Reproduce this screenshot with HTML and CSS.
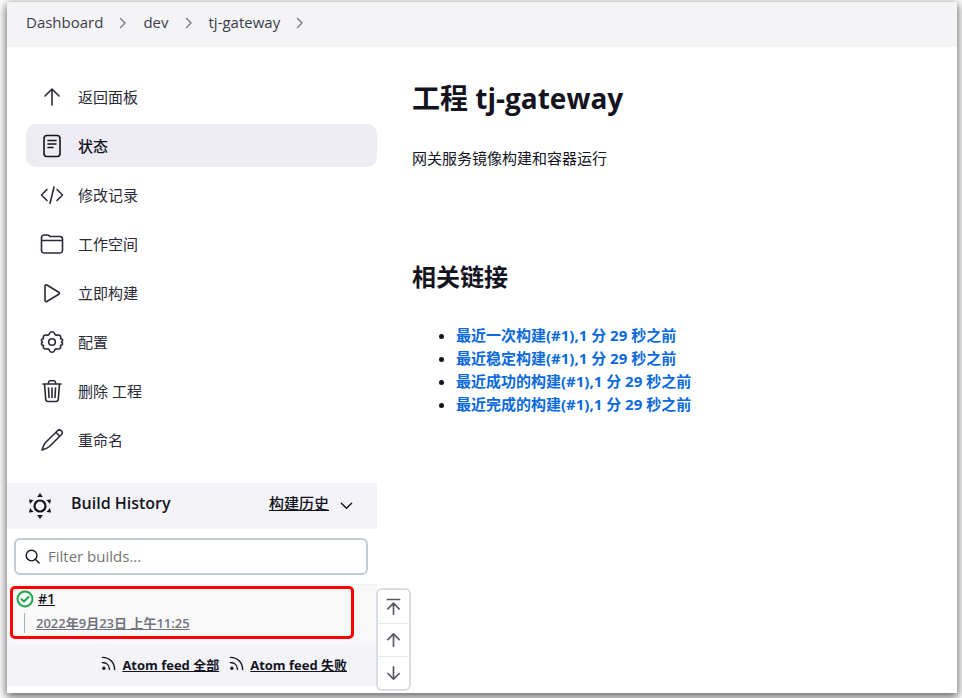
FILE: index.html
```html
<!DOCTYPE html>
<html lang="zh-CN">
<head>
    <meta charset="UTF-8">
    <meta name="viewport" content="width=device-width, initial-scale=1.0">
    <title>tj-gateway</title>
    <link rel="stylesheet" href="styles.css">
</head>
<body>

<div class="page">
    <nav class="breadcrumbs">
        <a href="#">Dashboard</a>
        <svg class="chevron" viewBox="0 0 8 12"><path d="M1.500 1.500L6 6L1.500 10.500"/></svg>
        <a href="#">dev</a>
        <svg class="chevron" viewBox="0 0 8 12"><path d="M1.500 1.500L6 6L1.500 10.500"/></svg>
        <a href="#">tj-gateway</a>
        <svg class="chevron" viewBox="0 0 8 12"><path d="M1.500 1.500L6 6L1.500 10.500"/></svg>
    </nav>

    <div class="columns">
        <aside class="side-panel">
            <div class="tasks">
                <a class="task" href="#">
                    <svg class="icon" viewBox="0 0 24 24"><path d="M12 20V4.500M5 11l7-7 7 7"/></svg>
                    <span>返回面板</span>
                </a>
                <a class="task active" href="#">
                    <svg class="icon" viewBox="0 0 24 24"><rect x="4" y="1.500" width="16" height="21" rx="3"/><path d="M8 6.500h8M8 10h8M8 13.500h5"/></svg>
                    <span>状态</span>
                </a>
                <a class="task" href="#">
                    <svg class="icon" viewBox="0 0 24 24"><path d="M7 6.500L1.500 12L7 17.500M17 6.500L22.500 12L17 17.500M14 4l-4 16.500"/></svg>
                    <span>修改记录</span>
                </a>
                <a class="task" href="#">
                    <svg class="icon" viewBox="0 0 24 24"><path d="M1.500 8.500V5.500a2.500 2.500 0 0 1 2.500-2.500h3.500c1.500 0 2 1.500 3.500 1.500h9a2.500 2.500 0 0 1 2.500 2.500v11.500a2.500 2.500 0 0 1-2.500 2.500H4a2.500 2.500 0 0 1-2.500-2.500V8.500h21"/></svg>
                    <span>工作空间</span>
                </a>
                <a class="task" href="#">
                    <svg class="icon" viewBox="0 0 24 24"><path d="M5 5v14.500c0 1 1 1.500 1.800 1l12-7.300c.8-.5.8-1.500 0-2L6.800 4C6 3.500 5 4 5 5z"/></svg>
                    <span>立即构建</span>
                </a>
                <a class="task" href="#">
                    <svg class="icon" viewBox="0 0 24 24"><circle cx="12" cy="12" r="3.300"/><path d="M9.600 3.200C10.400 1.200 13.600 1.200 14.400 3.200C14.900 4.900 16.200 5.500 17.800 5C20 4.600 21.500 6.700 20.500 8.600C22.600 8.800 23.400 10.600 21.600 12C23.400 13.400 22.600 15.200 20.500 15.400C21.500 17.300 20 19.400 17.800 19C16.200 18.500 14.900 19.100 14.400 20.800C13.600 22.800 10.400 22.800 9.600 20.800C9.100 19.100 7.800 18.500 6.200 19C4 19.400 2.500 17.300 3.500 15.400C1.400 15.200.6 13.400 2.400 12C.6 10.600 1.400 8.800 3.500 8.600C2.500 6.700 4 4.600 6.200 5C7.800 5.500 9.100 4.900 9.600 3.200z"/></svg>
                    <span>配置</span>
                </a>
                <a class="task" href="#">
                    <svg class="icon" viewBox="0 0 24 24"><path d="M3 5h18M4.500 5l1.200 15c.1 1.500 1 2.500 2.300 2.500h8c1.300 0 2.200-1 2.300-2.500L19.500 5M8.500 5V3.500c0-1 .5-1.700 1.500-1.700h4c1 0 1.500.7 1.500 1.700V5M8.500 9l.5 9.500M12 9v9.500M15.500 9l-.5 9.500"/></svg>
                    <span>删除 工程</span>
                </a>
                <a class="task" href="#">
                    <svg class="icon" viewBox="0 0 24 24"><path d="M17.500 2.700L5.500 14.500C4 16.200 3 18.500 2 22c3.500-1 5.800-2 7.500-3.500l12-12c1-1.100.9-2.700-.1-3.700s-2.800-1.100-3.900-.1zM16 4.500l3.800 3.800"/></svg>
                    <span>重命名</span>
                </a>
            </div>

            <section class="history">
                <div class="history-header">
                    <svg class="history-icon" viewBox="0 0 24 26"><circle cx="12" cy="13" r="5.500"/><path class="solid" d="M12 0l2.800 4H9.200zM12 26l2.800-4H9.200zM1 6.500l4.500.5L2 11zM23 6.500l-4.500.5L22 11zM1 19.500l4.500-.5L2 15zM23 19.500l-4.500-.5L22 15z"/></svg>
                    <h3>Build History</h3>
                    <a class="trend" href="#">构建历史</a>
                    <svg class="arrow-down" viewBox="0 0 14 8"><path d="M1.500 1L7 6.500L12.500 1"/></svg>
                </div>

                <div class="search">
                    <svg class="search-icon" viewBox="0 0 16 16"><circle cx="7" cy="7" r="5.700"/><path d="M11 11l4 4"/></svg>
                    <input type="text" placeholder="Filter builds..." aria-label="Filter builds">
                </div>

                <div class="builds">
                    <div class="build">
                        <div class="build-name">
                            <svg class="status" viewBox="0 0 18 18"><circle cx="9" cy="9" r="7.500"/><path d="M5.500 9.200l2.500 2.300 4.500-4.500"/></svg>
                            <a href="#">#1</a>
                        </div>
                        <div class="build-date">
                            <a href="#">2022年9月23日 上午11:25</a>
                        </div>
                    </div>
                </div>

                <div class="feeds">
                    <svg class="feed-icon" viewBox="0 0 16 16"><circle class="solid" cx="3" cy="13" r="1.800"/><path d="M1.500 7c4.500 0 7.500 3 7.500 7.500M1.500 1.500C9 1.500 14.500 7 14.500 14.500"/></svg>
                    <a href="#">Atom feed 全部</a>
                    <svg class="feed-icon" viewBox="0 0 16 16"><circle class="solid" cx="3" cy="13" r="1.800"/><path d="M1.500 7c4.500 0 7.500 3 7.500 7.500M1.500 1.500C9 1.500 14.500 7 14.500 14.500"/></svg>
                    <a href="#">Atom feed 失败</a>
                </div>

                <div class="pager">
                    <button type="button" aria-label="Newest builds">
                        <svg viewBox="0 0 16 18"><path d="M1.500 1.500h13M8 17.500V6M2 11.500l6-6 6 6"/></svg>
                    </button>
                    <button type="button" aria-label="Newer builds">
                        <svg viewBox="0 0 16 18"><path d="M8 15V2.500M2 8l6-6 6 6"/></svg>
                    </button>
                    <button type="button" aria-label="Older builds">
                        <svg viewBox="0 0 16 18"><path d="M8 2v12.500M2 9l6 6 6-6"/></svg>
                    </button>
                </div>
            </section>
        </aside>

        <main class="main-panel">
            <h1>工程 tj-gateway</h1>
            <p class="description">网关服务镜像构建和容器运行</p>
            <h2>相关链接</h2>
            <ul class="permalinks">
                <li><a href="#">最近一次构建(#1),1 分 29 秒之前</a></li>
                <li><a href="#">最近稳定构建(#1),1 分 29 秒之前</a></li>
                <li><a href="#">最近成功的构建(#1),1 分 29 秒之前</a></li>
                <li><a href="#">最近完成的构建(#1),1 分 29 秒之前</a></li>
            </ul>
        </main>
    </div>
</div>

</body>
</html>
```
FILE: styles.css
```css
* {
    box-sizing: border-box;
}
body {
    margin: 0;
    padding: 2px 5px 5px 7px;
    background: #fff;
    color: #14141f;
    font-family: "Open Sans", "Noto Sans CJK SC", sans-serif;
    font-size: 15px;
    line-height: 23px;
}
a {
    color: inherit;
}
svg {
    display: block;
    flex: none;
    fill: none;
    stroke: currentColor;
    stroke-linecap: round;
    stroke-linejoin: round;
}
.solid {
    fill: currentColor;
    stroke: none;
}
.page {
    min-height: calc(100vh - 7px);
    background: #fff;
    box-shadow: 0 3px 9px 1px rgba(0, 0, 0, 0.6);
}

/* breadcrumbs */
.breadcrumbs {
    display: flex;
    align-items: center;
    height: 45px;
    padding: 0 19px 4px;
    background: #f4f4f7;
    color: #3c3c48;
}
.breadcrumbs a {
    text-decoration: none;
}
.chevron {
    width: 8px;
    height: 12px;
    margin: 0 16px;
    stroke: #82828c;
    stroke-width: 1.5;
}

.columns {
    display: grid;
    grid-template-columns: 370px 1fr;
}

/* side panel */
.tasks {
    display: flex;
    flex-direction: column;
    gap: 6px;
    padding: 28px 0 22px 19px;
}
.task {
    display: flex;
    align-items: center;
    gap: 14px;
    height: 43px;
    padding: 1px 14px 0;
    border-radius: 10px;
    color: #2a2a36;
    text-decoration: none;
}
.task.active {
    background: #edecf2;
    color: #14141f;
    font-weight: 500;
}
.icon {
    width: 24px;
    height: 24px;
    stroke-width: 1.6;
}
.history {
    position: relative;
}
.history-header {
    display: flex;
    align-items: center;
    height: 46px;
    padding: 0 24px 0 21px;
    background: #f3f3f8;
}
.history-icon {
    width: 24px;
    height: 26px;
    stroke-width: 2.2;
}
.history-header h3 {
    flex: 1;
    margin: 0 0 5px 19px;
    font-size: 16px;
    font-weight: 600;
}
.trend {
    margin: 0 11px 5px 0;
    font-weight: 500;
}
.arrow-down {
    width: 13px;
    height: 8px;
    stroke-width: 1.5;
}
.search {
    display: flex;
    align-items: center;
    gap: 8px;
    height: 37px;
    margin: 9px 9px 9px 7px;
    padding: 0 9px;
    border: 2px solid #c3ccd3;
    border-radius: 6px;
}
.search-icon {
    width: 15px;
    height: 15px;
    stroke-width: 1.5;
}
.search input {
    flex: 1;
    min-width: 0;
    padding: 0;
    border: none;
    outline: none;
    background: none;
    font: inherit;
}
.search input::placeholder {
    color: #757575;
}

/* build list */
.builds {
    padding: 1px 23px 5px 3px;
    border-top: 1px solid #f2f2f4;
    background: #f8f8f8;
}
.build {
    height: 53px;
    padding-left: 3px;
    border: 3px solid #f00;
    border-radius: 5px;
    line-height: 20px;
}
.build-name {
    display: flex;
    align-items: center;
    gap: 4px;
    height: 20px;
    font-size: 14px;
    font-weight: 600;
}
.status {
    width: 18px;
    height: 18px;
    stroke: #1ea64b;
    stroke-width: 2;
}
.build-date {
    margin: 4px 0 0 8px;
    padding-left: 11px;
    border-left: 1px solid #a4afba;
    color: #73737d;
    font-size: 13px;
    font-weight: 600;
}
.feeds {
    display: flex;
    align-items: center;
    justify-content: flex-end;
    gap: 6px;
    height: 42px;
    padding-right: 30px;
    background: #f3f3f8;
    font-size: 13px;
    font-weight: 700;
}
.feed-icon {
    width: 15px;
    height: 15px;
    margin: 0 0 4px 4px;
    stroke-width: 1.5;
}
.pager {
    position: absolute;
    right: -34px;
    bottom: -5px;
    width: 35px;
    border: 2px solid #d8dee3;
    border-radius: 6px;
    background: #fff;
}
.pager button {
    display: flex;
    align-items: center;
    justify-content: center;
    width: 100%;
    height: 33px;
    padding: 0;
    border: none;
    background: none;
    color: #5a5a66;
}
.pager button + button {
    border-top: 1px solid #e8ebee;
}
.pager svg {
    width: 15px;
    height: 17px;
    stroke-width: 1.8;
}

/* main panel */
.main-panel {
    padding: 31px 35px;
}
h1 {
    margin: 0;
    font-size: 28px;
    font-weight: 700;
    line-height: 40px;
}
.description {
    margin: 29px 0 0;
}
h2 {
    margin: 89px 0 0;
    font-size: 24px;
    font-weight: 700;
    line-height: 36px;
}
.permalinks {
    margin: 29px 0 0;
    padding-left: 44px;
}
.permalinks a {
    color: #0b6adb;
    font-weight: 700;
    text-decoration: none;
}
```
